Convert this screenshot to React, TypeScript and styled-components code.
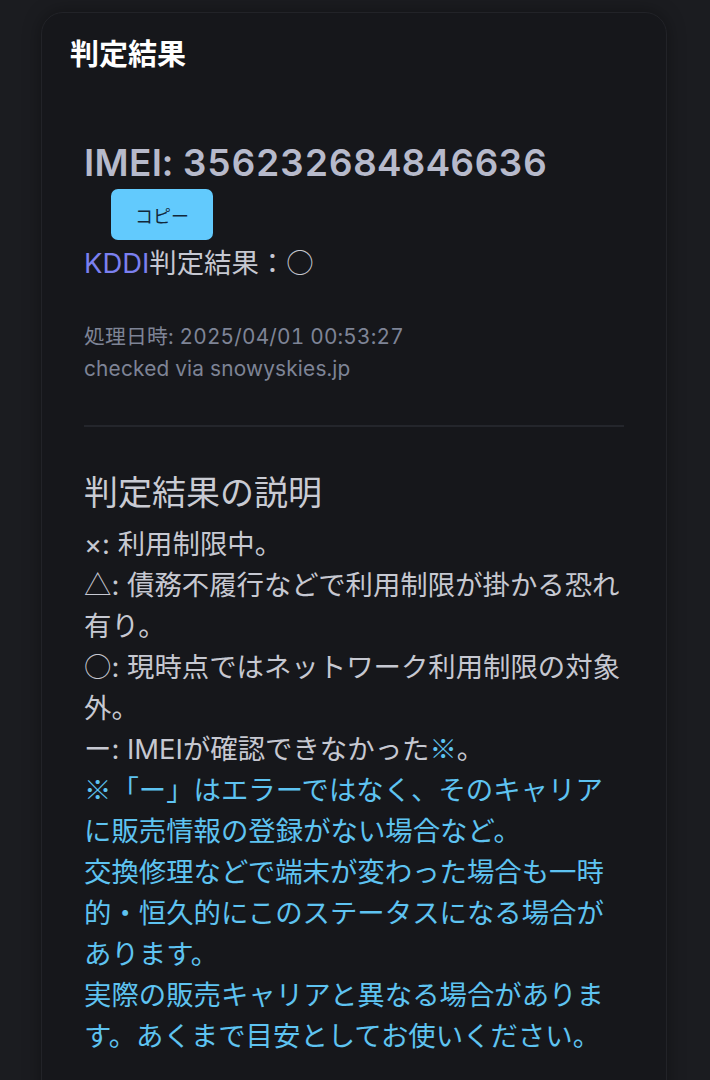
import styled, { createGlobalStyle } from 'styled-components';

const GlobalStyle = createGlobalStyle`
    html, body {
        margin: 0;
        padding: 0;
        background-color: #1b1c20;
    }
    body {
        font-family: Inter, "Noto Sans CJK JP", sans-serif;
        -webkit-font-smoothing: antialiased;
    }
`;

export default function App() {
    const imei = '356232684846636';

    return (
        <>
            <GlobalStyle />
            <Page>
                <Card>
                    <h1 className="title">判定結果</h1>
                    <div className="result">
                        <p className="imei">IMEI: {imei}</p>
                        <CopyButton type="button">コピー</CopyButton>
                        <p className="carrier">
                            <span className="name">KDDI</span>判定結果：<Sym>○</Sym>
                        </p>
                        <div className="meta">
                            <p>処理日時: 2025/04/01 00:53:27</p>
                            <p>checked via snowyskies.jp</p>
                        </div>
                    </div>
                    <hr />
                    <Legend>
                        <h2>判定結果の説明</h2>
                        <p>×: 利用制限中。</p>
                        <p><Sym>△</Sym>: 債務不履行などで利用制限が掛かる恐れ有り。</p>
                        <p><Sym>○</Sym>: 現時点ではネットワーク利用制限の対象外。</p>
                        <p>ー: IMEIが確認できなかった<Sym $blue>※</Sym>。</p>
                        <Note>
                            <Sym>※</Sym>「ー」はエラーではなく、そのキャリアに販売情報の登録がない場合など。<br />
                            交換修理などで端末が変わった場合も一時的・恒久的にこのステータスになる場合があります。<br />
                            実際の販売キャリアと異なる場合があります。あくまで目安としてお使いください。
                        </Note>
                    </Legend>
                </Card>
            </Page>
        </>
    )
}

const Page = styled.div`
    min-height: 1080px;
    padding: 12px 43px 0 41px;
    box-sizing: border-box;
`;

const Card = styled.div`
    min-height: 1100px;
    box-sizing: border-box;
    padding: 24px 28px;
    background-color: #16171b;
    border: 1px solid #222328;
    border-radius: 22px;
    box-shadow: 0 0 18px rgba(0, 0, 0, 0.35);

    p, h1, h2 {
        margin: 0;
    }

    .title {
        font-size: 29px;
        line-height: 36px;
        font-weight: 700;
        color: #ffffff;
    }

    .result {
        padding: 68px 14px 0;

        .imei {
            font-size: 37px;
            line-height: 44px;
            font-weight: 600;
            letter-spacing: 0.35px;
            font-variant-numeric: tabular-nums;
            color: #b7bacb;
        }

        .carrier {
            margin-top: 3px;
            font-size: 27.4px;
            line-height: 41px;
            color: #c6c8d1;

            .name {
                color: #7b80f0;
            }
        }

        .meta {
            margin-top: 37px;
            font-size: 20.8px;
            line-height: 32px;
            letter-spacing: 0.2px;
            font-variant-numeric: tabular-nums;
            color: #7e8496;
        }
    }

    hr {
        margin: 40px 14px 0;
        border: none;
        height: 2px;
        background-color: #24262c;
    }
`;

const CopyButton = styled.button`
    display: block;
    margin: 4px 0 0 27px;
    width: 102px;
    height: 51px;
    border: none;
    border-radius: 7px;
    background-color: #62cafd;
    color: #12283a;
    font-family: "Noto Sans CJK JP", sans-serif;
    font-size: 18px;
    cursor: pointer;
`;

const Legend = styled.div`
    padding: 45px 14px 0;
    font-size: 27.4px;
    line-height: 41px;
    color: #c6c8d1;

    h2 {
        font-size: 34px;
        line-height: 41px;
        font-weight: 400;
        margin-bottom: 11px;
        color: #c9cbd3;
    }
`;

// full-width symbols come from the CJK face, like on the phone
const Sym = styled.span<{ $blue?: boolean }>`
    font-family: "Noto Sans CJK JP", sans-serif;
    font-weight: 300;
    line-height: 1;
    color: ${({ $blue }) => ($blue ? '#5ec3f1' : 'inherit')};
`;

const Note = styled.p`
    color: #5ec3f1;
`;
